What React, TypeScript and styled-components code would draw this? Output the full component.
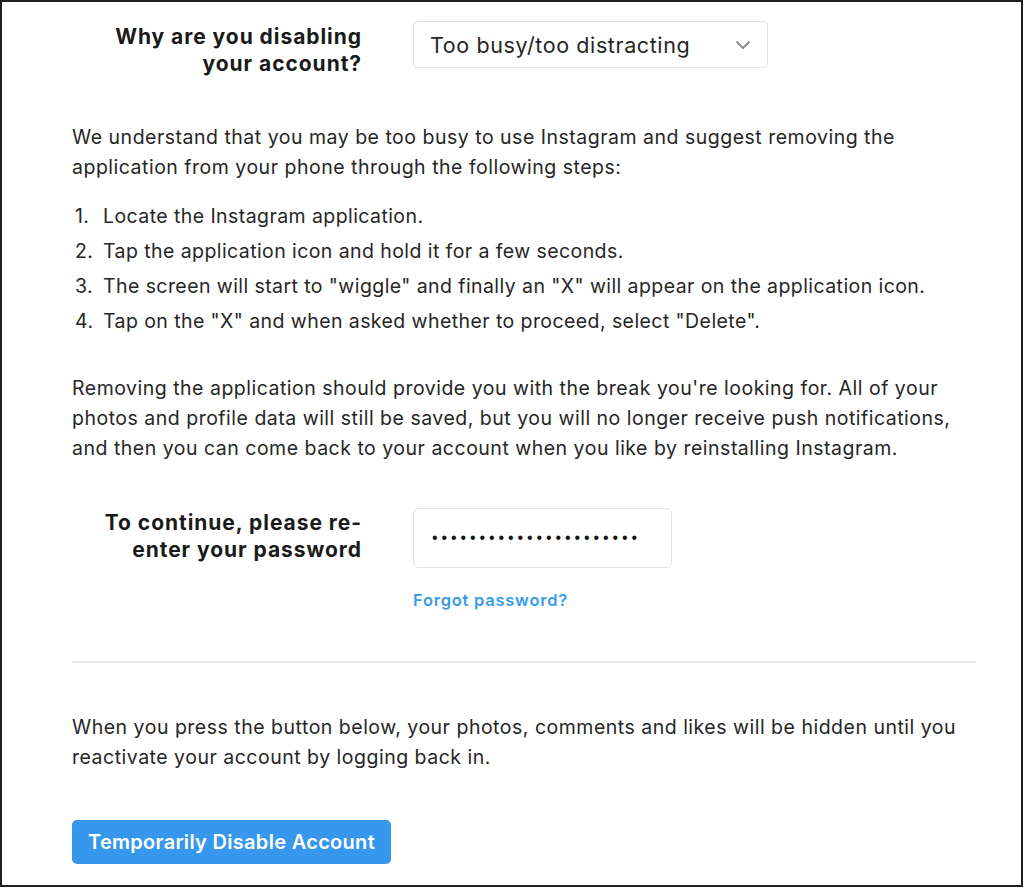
import React from "react";
import styled, { createGlobalStyle } from "styled-components";

const Global = createGlobalStyle`
  html, body { margin: 0; padding: 0; background: #ffffff; }
  body { font-family: Inter, "Liberation Sans", Arial, sans-serif; color: #262626; }
`;

const Frame = styled.div`
  box-sizing: border-box;
  width: 1023px;
  height: 887px;
  border: 2px solid #1e1e1e;
  background: #fff;
  padding: 19px 0 0 70px;
  overflow: hidden;
`;

const FieldRow = styled.div<{ $mt?: number }>`
  display: grid;
  grid-template-columns: 290px auto;
  column-gap: 51px;
  align-items: start;
  margin-top: ${(p) => p.$mt ?? 0}px;
`;

const Label = styled.label<{ $pt?: number }>`
  text-align: right;
  font-weight: 700;
  font-size: 21px;
  letter-spacing: 0.95px;
  line-height: 27px;
  color: #1a1a1a;
  padding-top: ${(p) => p.$pt ?? 0}px;
`;

const SelectBox = styled.div`
  box-sizing: border-box;
  width: 355px;
  height: 47px;
  border: 1px solid #e3e3e3;
  border-radius: 4px;
  display: flex;
  align-items: center;
  justify-content: space-between;
  padding: 0 16px 0 16px;
  font-size: 21.5px;
  letter-spacing: 0.6px;
  color: #262626;
`;

const FieldCol = styled.div`
  display: flex;
  flex-direction: column;
  align-items: flex-start;
`;

const PasswordBox = styled.div`
  box-sizing: border-box;
  width: 259px;
  height: 60px;
  border: 1px solid #e3e3e3;
  border-radius: 6px;
  display: flex;
  align-items: center;
  padding: 0 18px;
  font-family: "Liberation Sans", Arial, sans-serif;
  font-size: 16px;
  letter-spacing: 3.9px;
  color: #111;
`;

const ForgotLink = styled.a`
  margin-top: 22px;
  font-size: 16.5px;
  font-weight: 600;
  letter-spacing: 0.75px;
  color: #3a9be8;
  text-decoration: none;
`;

const Para = styled.p<{ $mt: number }>`
  margin: ${(p) => p.$mt}px 0 0;
  white-space: nowrap;
  font-size: 19.5px;
  letter-spacing: 0.5px;
  line-height: 30px;
  color: #262626;
`;

const Steps = styled.ol`
  margin: 17px 0 0;
  padding: 0;
  list-style: none;
  counter-reset: step;
`;

const Step = styled.li`
  counter-increment: step;
  font-size: 19.5px;
  letter-spacing: 0.42px;
  line-height: 35px;
  padding-left: 3px;
  display: flex;
  &::before {
    content: counter(step) ".";
    width: 28px;
    flex: none;
  }
`;

const Divider = styled.hr`
  margin: 51px 0 0;
  width: 904px;
  border: none;
  border-top: 2px solid #ececec;
`;

const DisableButton = styled.button`
  margin-top: 48px;
  width: 319px;
  height: 44px;
  border: none;
  border-radius: 5px;
  background: #3797ec;
  color: #fff;
  font-family: Inter, "Liberation Sans", Arial, sans-serif;
  font-weight: 600;
  font-size: 20px;
  letter-spacing: 0.3px;
  padding: 0;
`;

const Chevron = () => (
  <svg width="16" height="10" viewBox="0 0 16 10" fill="none">
    <path d="M2 2l6 6 6-6" stroke="#8a8a8a" strokeWidth="1.8" strokeLinecap="round" strokeLinejoin="round" />
  </svg>
);

export default function App() {
  return (
    <>
      <Global />
      <Frame>
        <FieldRow>
          <Label $pt={2}>
            Why are you disabling
            <br />
            your account?
          </Label>
          <SelectBox>
            <span>Too busy/too distracting</span>
            <Chevron />
          </SelectBox>
        </FieldRow>

        <Para $mt={45}>
          We understand that you may be too busy to use Instagram and suggest removing the
          <br />
          application from your phone through the following steps:
        </Para>

        <Steps>
          <Step>Locate the Instagram application.</Step>
          <Step>Tap the application icon and hold it for a few seconds.</Step>
          <Step>The screen will start to "wiggle" and finally an "X" will appear on the application icon.</Step>
          <Step>Tap on the "X" and when asked whether to proceed, select "Delete".</Step>
        </Steps>

        <Para $mt={34}>
          Removing the application should provide you with the break you're looking for. All of your
          <br />
          photos and profile data will still be saved, but you will no longer receive push notifications,
          <br />
          and then you can come back to your account when you like by reinstalling Instagram.
        </Para>

        <FieldRow $mt={45}>
          <Label $pt={1}>
            To continue, please re-
            <br />
            enter your password
          </Label>
          <FieldCol>
            <PasswordBox>••••••••••••••••••••••</PasswordBox>
            <ForgotLink href="#">Forgot password?</ForgotLink>
          </FieldCol>
        </FieldRow>

        <Divider />

        <Para $mt={49}>
          When you press the button below, your photos, comments and likes will be hidden until you
          <br />
          reactivate your account by logging back in.
        </Para>

        <DisableButton>Temporarily Disable Account</DisableButton>
      </Frame>
    </>
  );
}
